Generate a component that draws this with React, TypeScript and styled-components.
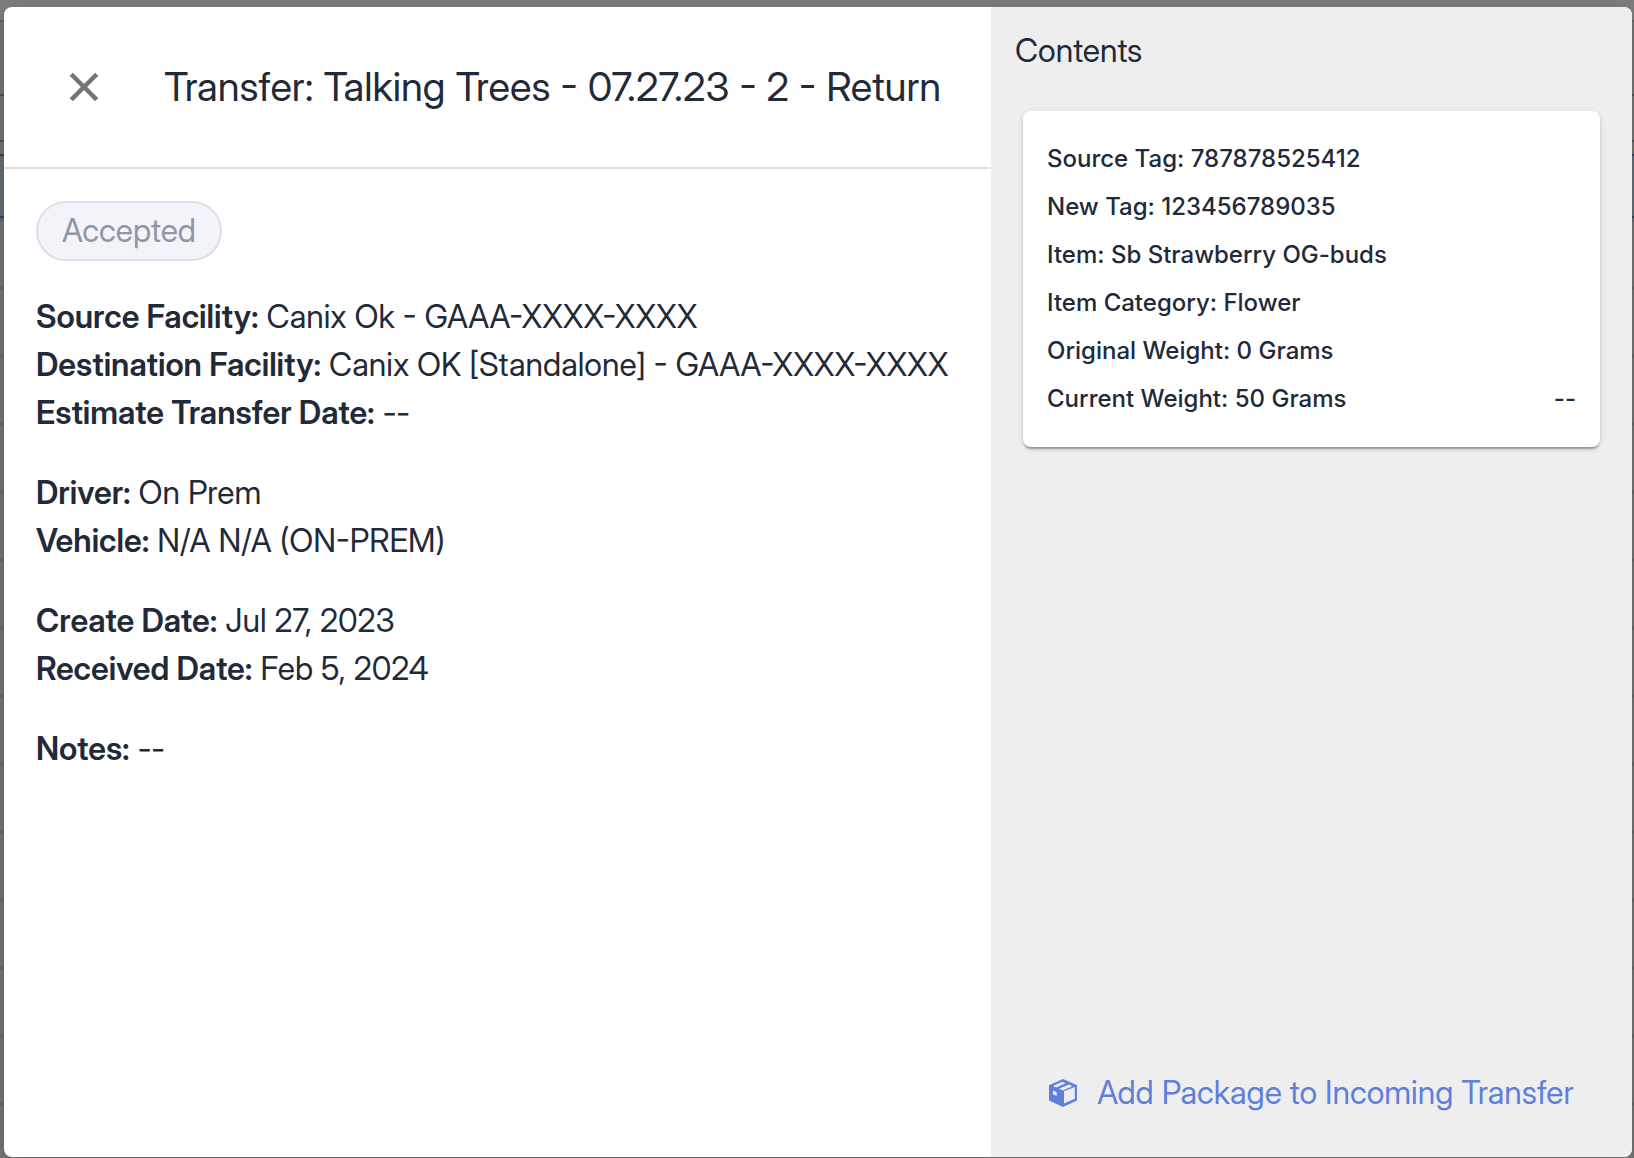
import React from "react";
import styled, { createGlobalStyle } from "styled-components";

const GlobalStyle = createGlobalStyle`
  *, *::before, *::after { box-sizing: border-box; }
  html, body, #root { height: 100%; }
  body {
    margin: 0;
    overflow: hidden;
    font-family: "Inter Display", Inter, "Liberation Sans", sans-serif;
    color: #222938;
    background: #747371;
  }
`;

const Page = styled.div`
  position: relative;
  height: 100vh;
  overflow: hidden;
`;

const Backdrop = styled.div`
  position: absolute;
  inset: 0;
  display: flex;
  flex-direction: column;
  background: #747371;
`;

const Band = styled.div<{ $height: number; $line: string; $fill?: string }>`
  flex: none;
  height: ${(p) => p.$height}px;
  border-bottom: 2px solid ${(p) => p.$line};
  background: ${(p) => p.$fill ?? "transparent"};
`;

const TableBand = styled.div`
  flex: none;
  height: 68px;
  border-bottom: 4px solid #666;
`;

const Dialog = styled.section`
  position: relative;
  display: grid;
  grid-template-columns: minmax(0, 1fr) 641px;
  height: calc(100vh - 8px);
  margin: 7px 2px 1px 4px;
  border-radius: 8px;
  overflow: hidden;
  background: #fff;
  box-shadow: 0 4px 24px rgba(0, 0, 0, 0.15);
`;

const Main = styled.div`
  display: flex;
  flex-direction: column;
`;

const Header = styled.header`
  display: flex;
  align-items: center;
  gap: 56px;
  height: 162px;
  padding: 0 48px 0 56px;
  border-bottom: 2px solid #dedede;
`;

const CloseButton = styled.button`
  display: flex;
  padding: 0;
  border: 0;
  background: none;
  color: #757575;
  cursor: pointer;
`;

const Title = styled.h1`
  margin: 0;
  font-size: 40px;
  font-weight: 400;
  line-height: 48px;
  white-space: nowrap;
`;

const Details = styled.div`
  display: flex;
  flex-direction: column;
  align-items: flex-start;
  gap: 32px;
  padding: 32px;
`;

const Status = styled.span`
  height: 60px;
  padding: 0 24px;
  border: 2px solid #dddfe6;
  border-radius: 30px;
  background: #f2f4f9;
  color: #8d97a6;
  font-size: 32px;
  line-height: 56px;
`;

const Group = styled.dl`
  margin: 0;
  font-size: 32px;
  line-height: 48px;
`;

const Field = styled.div`
  display: flex;
  gap: 8px;
  white-space: nowrap;
`;

const Label = styled.dt`
  font-weight: 600;
`;

const Value = styled.dd`
  margin: 0;
`;

const Side = styled.aside`
  display: flex;
  flex-direction: column;
  background: #eee;
`;

const SideTitle = styled.h2`
  margin: 0;
  padding: 20px 24px 0;
  font-size: 32px;
  font-weight: 400;
  line-height: 48px;
`;

const Card = styled.article`
  display: flex;
  align-items: flex-end;
  justify-content: space-between;
  margin: 36px 32px;
  padding: 24px;
  border-radius: 8px;
  background: #fff;
  box-shadow: 0 4px 2px -2px rgba(0, 0, 0, 0.2), 0 2px 2px rgba(0, 0, 0, 0.14),
    0 2px 6px rgba(0, 0, 0, 0.12);
  font-family: Inter, "Liberation Sans", sans-serif;
  font-size: 24px;
  font-weight: 500;
  line-height: 48px;
`;

const CardLines = styled.ul`
  margin: 0;
  padding: 0;
  list-style: none;
`;

const AddButton = styled.button`
  display: flex;
  align-items: center;
  align-self: center;
  gap: 20px;
  margin-top: auto;
  padding: 0 0 40px;
  border: 0;
  background: none;
  color: #5f7fdb;
  font: inherit;
  font-size: 32px;
  line-height: 48px;
  white-space: nowrap;
  cursor: pointer;
`;

const CloseIcon = () => (
  <svg width="48" height="48" viewBox="0 0 24 24" aria-hidden="true">
    <path
      fill="currentColor"
      stroke="currentColor"
      strokeWidth="0.3"
      strokeLinejoin="round"
      d="M19 6.41 17.59 5 12 10.59 6.41 5 5 6.41 10.59 12 5 17.59 6.41 19 12 13.41 17.59 19 19 17.59 13.41 12z"
    />
  </svg>
);

const PackageIcon = () => (
  <svg width="28" height="28" viewBox="0 0 28 28" aria-hidden="true">
    <path
      fill="currentColor"
      fillRule="evenodd"
      d="M14 0 28 6.300V21.500L14 28 0 21.500V6.300ZM15 12.300V24.600L25.800 19.800V7.900ZM4 11.500V15.200L7.700 17V13.200ZM3.800 7 7.200 8.500 16.600 4.200 13.500 2.800ZM10 9.800 13.800 11.500 23.600 7.200 19.800 5.600Z"
    />
  </svg>
);

const groups = [
  [
    ["Source Facility:", "Canix Ok - GAAA-XXXX-XXXX"],
    ["Destination Facility:", "Canix OK [Standalone] - GAAA-XXXX-XXXX"],
    ["Estimate Transfer Date:", "--"],
  ],
  [
    ["Driver:", "On Prem"],
    ["Vehicle:", "N/A N/A (ON-PREM)"],
  ],
  [
    ["Create Date:", "Jul 27, 2023"],
    ["Received Date:", "Feb 5, 2024"],
  ],
  [["Notes:", "--"]],
];

const contents = [
  "Source Tag: 787878525412",
  "New Tag: 123456789035",
  "Item: Sb Strawberry OG-buds",
  "Item Category: Flower",
  "Original Weight: 0 Grams",
  "Current Weight: 50 Grams",
];

export default function App() {
  return (
    <Page>
      <GlobalStyle />
      <Backdrop aria-hidden="true">
        <Band $height={22} $line="#626262" $fill="#7e7e7e" />
        <Band $height={74} $line="#505250" />
        <Band $height={46} $line="#505250" />
        <Band $height={14} $line="#24486f" />
        <Band $height={62} $line="#24486f" $fill="#636b71" />
        <Band $height={4} $line="#666" $fill="#666" />
        {Array.from({ length: 14 }, (_, i) => (
          <TableBand key={i} />
        ))}
      </Backdrop>
      <Dialog role="dialog" aria-labelledby="transfer-title">
        <Main>
          <Header>
            <CloseButton type="button" aria-label="Close">
              <CloseIcon />
            </CloseButton>
            <Title id="transfer-title">
              Transfer: Talking Trees - 07.27.23 - 2 - Return
            </Title>
          </Header>
          <Details>
            <Status>Accepted</Status>
            {groups.map((fields) => (
              <Group key={fields[0][0]}>
                {fields.map(([label, value]) => (
                  <Field key={label}>
                    <Label>{label}</Label>
                    <Value>{value}</Value>
                  </Field>
                ))}
              </Group>
            ))}
          </Details>
        </Main>
        <Side>
          <SideTitle>Contents</SideTitle>
          <Card>
            <CardLines>
              {contents.map((line) => (
                <li key={line}>{line}</li>
              ))}
            </CardLines>
            <span>--</span>
          </Card>
          <AddButton type="button">
            <PackageIcon />
            Add Package to Incoming Transfer
          </AddButton>
        </Side>
      </Dialog>
    </Page>
  );
}
